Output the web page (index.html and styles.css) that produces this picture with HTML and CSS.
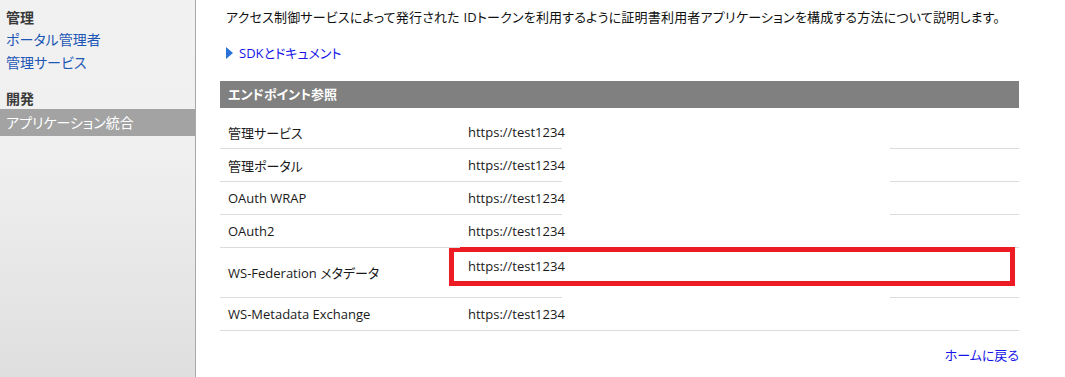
FILE: index.html
```html
<!DOCTYPE html>
<html lang="ja">
<head>
    <meta charset="UTF-8">
    <meta name="viewport" content="width=device-width, initial-scale=1.0">
    <title>アプリケーション統合</title>
    <link rel="stylesheet" href="styles.css">
</head>
<body>
    <nav class="sidebar">
        <h3>管理</h3>
        <a href="#" class="side-link">ポータル管理者</a>
        <a href="#" class="side-link">管理サービス</a>
        <h3 class="dev">開発</h3>
        <a href="#" class="side-link selected">アプリケーション統合</a>
    </nav>

    <main class="content">
        <p class="intro">アクセス制御サービスによって発行された IDトークンを利用するように証明書利用者アプリケーションを構成する方法について説明します。</p>
        <a href="#" class="sdk-link"><span class="arrow"></span>SDKとドキュメント</a>

        <div class="section-head">エンドポイント参照</div>
        <table class="endpoints">
            <tr class="cut">
                <td class="name">管理サービス</td>
                <td class="url">https://test1234</td>
            </tr>
            <tr class="cut">
                <td class="name">管理ポータル</td>
                <td class="url">https://test1234</td>
            </tr>
            <tr class="cut">
                <td class="name">OAuth WRAP</td>
                <td class="url">https://test1234</td>
            </tr>
            <tr class="cut">
                <td class="name">OAuth2</td>
                <td class="url">https://test1234</td>
            </tr>
            <tr class="cut tall">
                <td class="name">WS-Federation メタデータ</td>
                <td class="url"><div class="mark">https://test1234</div></td>
            </tr>
            <tr>
                <td class="name">WS-Metadata Exchange</td>
                <td class="url">https://test1234</td>
            </tr>
        </table>

        <div class="footer-link"><a href="#">ホームに戻る</a></div>
    </main>
</body>
</html>
```

FILE: styles.css
```css
body {
    margin: 0;
    display: flex;
    min-height: 100vh;
    font-family: 'Open Sans', 'Noto Sans CJK JP', sans-serif;
    font-feature-settings: "palt";
    background: white;
}
.sidebar {
    width: 195px;
    flex-shrink: 0;
    background: linear-gradient(#f1f1f1, #f0f0f0 40%, #dfdfdf);
    border-right: 1px solid #a8a8a8;
    padding-top: 8px;
}
.sidebar h3 {
    margin: 0;
    padding: 0 6px;
    font-size: 14px;
    line-height: 20px;
    color: #3a3a3a;
}
.sidebar h3.dev {
    margin-top: 15px;
}
.side-link {
    display: block;
    padding: 0 6px;
    font-size: 14px;
    line-height: 23px;
    color: #1d57b5;
    text-decoration: none;
}
.side-link.selected {
    background: #a3a3a3;
    color: white;
    line-height: 27px;
}
.content {
    flex: 1;
    padding: 6px 46px 0 24px;
}
.intro {
    margin: 0 0 0 6px;
    font-size: 13px;
    line-height: 22px;
    letter-spacing: 0.2px;
    color: #111;
}
.sdk-link {
    display: flex;
    align-items: center;
    margin: 15px 0 0 6px;
    font-size: 13px;
    line-height: 20px;
    color: #1515e8;
    text-decoration: none;
}
.arrow {
    width: 0;
    height: 0;
    border-top: 6px solid transparent;
    border-bottom: 6px solid transparent;
    border-left: 7px solid #2a72d8;
    margin-right: 6px;
}
.section-head {
    margin-top: 18px;
    background: #808080;
    color: white;
    font-weight: bold;
    font-size: 13px;
    line-height: 27px;
    padding: 0 8px;
}
.endpoints {
    width: 100%;
    border-collapse: collapse;
    margin-top: 8px;
    font-size: 13px;
    color: #1a1a1a;
}
.endpoints td {
    height: 32px;
    padding: 0 8px;
    vertical-align: middle;
    border-bottom: 1px solid #dcdcdc;
}
.endpoints .name {
    width: 224px;
}
.cut .url {
    border-bottom: none;
    background: linear-gradient(to right, #dcdcdc 102px, transparent 102px 430px, #dcdcdc 430px) no-repeat left bottom / 100% 1px;
}
.tall td {
    height: 49px;
}
.tall .url {
    vertical-align: top;
}
.mark {
    margin: -1px -4px 0 -19px;
    padding: 0 14px;
    border: 5px solid #ed1c24;
    line-height: 29px;
}
.footer-link {
    text-align: right;
    margin-top: 14px;
    font-size: 13px;
}
.footer-link a {
    color: #1515e8;
    text-decoration: none;
}
```
